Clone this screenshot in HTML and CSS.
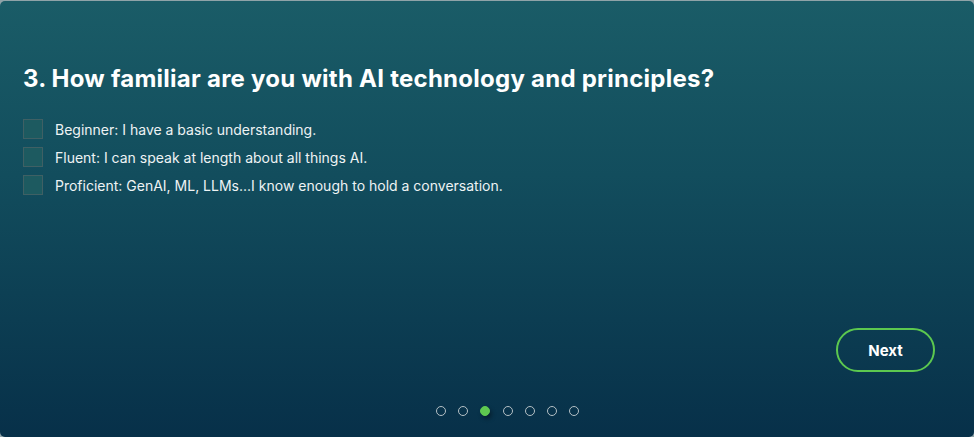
FILE: index.html
```html
<!DOCTYPE html>
<html>
<head>
<meta charset="utf-8">
<link rel="stylesheet" href="styles.css">
</head>
<body>
<main class="card">
  <section class="question">
    <h1 class="title"><span class="num">3.</span>How familiar are you with AI technology and principles?</h1>
    <ul class="options">
      <li class="option"><span class="box"></span><span class="label">Beginner: I have a basic understanding.</span></li>
      <li class="option"><span class="box"></span><span class="label">Fluent: I can speak at length about all things AI.</span></li>
      <li class="option"><span class="box"></span><span class="label">Proficient: GenAI, ML, LLMs...I know enough to hold a conversation.</span></li>
    </ul>
  </section>
  <div class="actions">
    <button class="next">Next</button>
  </div>
  <nav class="dots">
    <span class="dot"></span>
    <span class="dot"></span>
    <span class="dot active"></span>
    <span class="dot"></span>
    <span class="dot"></span>
    <span class="dot"></span>
    <span class="dot"></span>
  </nav>
</main>
</body>
</html>
```
FILE: styles.css
```css
html, body {
  margin: 0;
  padding: 0;
  height: 100%;
}
body {
  background: #8fa3a8;
  padding-top: 1px;
  box-sizing: border-box;
  font-family: Inter, Lato, sans-serif;
  color: #fff;
}
.card {
  height: 436px;
  box-sizing: border-box;
  border-radius: 5px;
  background: linear-gradient(180deg, #1a5c67 0%, #124d5d 40%, #073049 100%);
  display: flex;
  flex-direction: column;
  padding: 60px 24px 0 23px;
}
.title {
  margin: 0;
  font-size: 24px;
  font-weight: 700;
  line-height: 36px;
  letter-spacing: 0.25px;
}
.num {
  margin-right: 5px;
}
.options {
  list-style: none;
  margin: 22px 0 0;
  padding: 0;
  display: flex;
  flex-direction: column;
  gap: 8px;
}
.option {
  display: flex;
  align-items: center;
  gap: 12px;
  height: 20px;
}
.box {
  width: 18px;
  height: 18px;
  border: 1px solid #3f6064;
  background: #1d5a60;
  flex: none;
}
.label {
  font-size: 14px;
  color: #eef3f4;
  letter-spacing: 0;
}
.actions {
  margin-top: auto;
  display: flex;
  justify-content: flex-end;
  padding-right: 15px;
}
.next {
  width: 99px;
  height: 44px;
  border: 2px solid #5cc84f;
  border-radius: 22px;
  background: transparent;
  color: #fff;
  font-family: Inter, sans-serif;
  font-weight: 700;
  font-size: 15px;
  cursor: pointer;
}
.dots {
  display: flex;
  justify-content: center;
  gap: 12.2px;
  padding: 34px 0 21px;
  margin-left: 42px;
}
.dot {
  box-sizing: border-box;
  width: 10px;
  height: 10px;
  border: 1.5px solid #b4c0c5;
  border-radius: 50%;
}
.dot.active {
  background: #5ec950;
  border-color: #5ec950;
  box-shadow: 2px 3px 4px rgba(0,0,0,0.35);
}
```
